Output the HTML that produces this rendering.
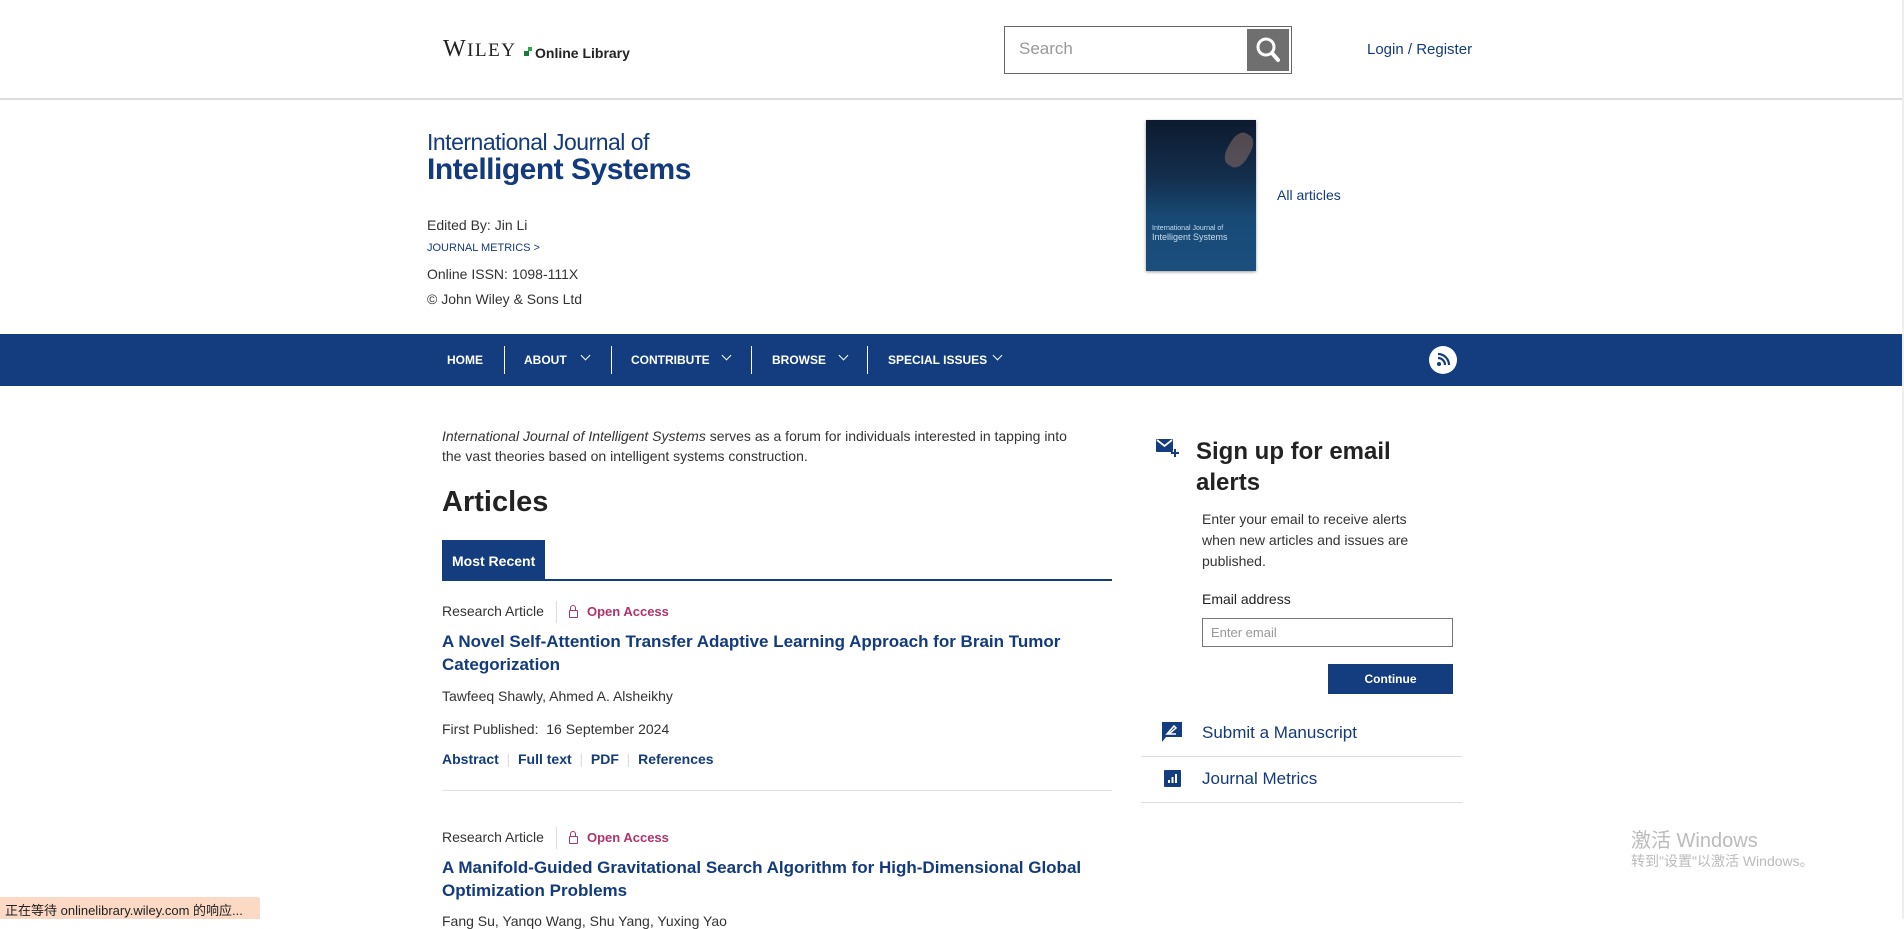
<!DOCTYPE html>
<html><head><meta charset="utf-8"><style>
*{margin:0;padding:0;box-sizing:border-box}
body{width:1904px;height:919px;overflow:hidden;background:#fff;font-family:"Liberation Sans","Noto Sans CJK SC",sans-serif;color:#333;position:relative}
.a{position:absolute;white-space:nowrap}
.blue{color:#133a7c}
.nav{position:absolute;left:0;top:334px;width:1904px;height:52px;background:#133d7e}
.nav span{position:absolute;top:19px;color:#fff;font-weight:bold;font-size:12px}
.sep{position:absolute;top:12px;width:1px;height:28px;background:#fff}
.chev{position:absolute;top:18px;width:7px;height:7px;border-right:1.5px solid #fff;border-bottom:1.5px solid #fff;transform:rotate(45deg)}
.t{font-size:17px;font-weight:bold;color:#133a7c;line-height:23px}
.s14{font-size:14px}
.lock{position:absolute;width:9px;height:8px;border:1.5px solid #b0336b;border-radius:1px}
.lock:before{content:"";position:absolute;left:0px;top:-6px;width:4px;height:4px;border:1.5px solid #b0336b;border-bottom:none;border-radius:3px 3px 0 0}
</style></head><body>
<div class="a" style="left:0;top:0;width:1904px;height:100px;border-bottom:2px solid #ddd"></div>
<div class="a" style="left:443px;top:36px;font-family:'Liberation Serif',serif;font-size:24px;color:#222;letter-spacing:1.5px">W<span style="font-size:19px">ILEY</span></div>
<div class="a" style="left:524px;top:51px;width:5px;height:5px;background:#1a7a3a"></div>
<div class="a" style="left:528px;top:47px;width:4px;height:4px;background:#2aa84a"></div>
<div class="a" style="left:535px;top:45px;font-size:14px;color:#222;font-weight:bold">Online Library</div>
<div class="a" style="left:1004px;top:26px;width:288px;height:48px;border:1px solid #666"></div>
<div class="a" style="left:1019px;top:39px;font-size:17px;color:#999">Search</div>
<div class="a" style="left:1247px;top:29px;width:42px;height:42px;background:#6f6f6f">
<svg width="42" height="42" viewBox="0 0 42 42"><circle cx="19" cy="18" r="8" fill="none" stroke="#fff" stroke-width="3"/><line x1="25" y1="24" x2="31" y2="31" stroke="#fff" stroke-width="4" stroke-linecap="round"/></svg></div>
<div class="a blue" style="left:1367px;top:41px;font-size:15px">Login / Register</div>
<div class="a blue" style="left:427px;top:129px;font-size:23px;letter-spacing:-0.5px">International Journal of</div>
<div class="a blue" style="left:427px;top:153px;font-size:30px;font-weight:bold;letter-spacing:-0.5px">Intelligent Systems</div>
<div class="a s14" style="left:427px;top:217px">Edited By: Jin Li</div>
<div class="a blue" style="left:427px;top:242px;font-size:11px">JOURNAL METRICS &gt;</div>
<div class="a s14" style="left:427px;top:266px">Online ISSN: 1098-111X</div>
<div class="a s14" style="left:427px;top:291px">© John Wiley &amp; Sons Ltd</div>
<div class="a" style="left:1146px;top:120px;width:110px;height:151px;background:linear-gradient(180deg,#0d1a2e 0%,#14304f 40%,#184a76 65%,#1a4e7c 100%);box-shadow:0 1px 3px #999">
<div style="position:absolute;right:6px;top:12px;width:22px;height:36px;border-radius:40%;background:#8a6e66;opacity:.55;transform:rotate(30deg)"></div>
<div style="position:absolute;left:6px;top:104px;color:#cde;font-size:7px;line-height:9px">International Journal of<br><span style="font-size:9px">Intelligent Systems</span></div></div>
<div class="a blue" style="left:1277px;top:187px;font-size:14px">All articles</div>
<div class="nav">
<span style="left:447px">HOME</span><div class="sep" style="left:504px"></div>
<span style="left:524px">ABOUT</span><div class="chev" style="left:582px"></div><div class="sep" style="left:611px"></div>
<span style="left:631px">CONTRIBUTE</span><div class="chev" style="left:723px"></div><div class="sep" style="left:751px"></div>
<span style="left:772px">BROWSE</span><div class="chev" style="left:840px"></div><div class="sep" style="left:867px"></div>
<span style="left:888px">SPECIAL ISSUES</span><div class="chev" style="left:994px"></div>
<div style="position:absolute;left:1429px;top:12px;width:28px;height:28px;border-radius:50%;background:#fff">
<svg width="28" height="28" viewBox="0 0 28 28"><circle cx="10" cy="18" r="2" fill="#133d7e"/><path d="M9 12a7 7 0 0 1 7 7M9 8a11 11 0 0 1 11 11" fill="none" stroke="#133d7e" stroke-width="2.2"/></svg></div>
</div>
<div class="a" style="left:442px;top:426px;font-size:14px;line-height:20px;color:#333"><i>International Journal of Intelligent Systems</i> serves as a forum for individuals interested in tapping into<br>the vast theories based on intelligent systems construction.</div>
<div class="a" style="left:442px;top:486px;font-size:29px;font-weight:bold;color:#222">Articles</div>
<div class="a" style="left:442px;top:540px;width:103px;height:40px;background:#133d7e;color:#fff;font-size:14px;font-weight:bold;padding:13px 0 0 10px">Most Recent</div>
<div class="a" style="left:442px;top:579px;width:670px;height:2px;background:#133d7e"></div>

<div class="a s14" style="left:442px;top:603px">Research Article</div>
<div class="a" style="left:556px;top:601px;width:1px;height:22px;background:#ddd"></div>
<div class="lock" style="left:569px;top:610px"></div>
<div class="a" style="left:587px;top:604px;font-size:13px;font-weight:bold;color:#b0336b">Open Access</div>
<div class="a t" style="left:442px;top:630px">A Novel Self-Attention Transfer Adaptive Learning Approach for Brain Tumor<br>Categorization</div>
<div class="a s14" style="left:442px;top:688px">Tawfeeq Shawly, Ahmed A. Alsheikhy</div>
<div class="a s14" style="left:442px;top:721px">First Published:&nbsp; 16 September 2024</div>
<div class="a blue" style="left:442px;top:751px;font-size:14px;font-weight:bold">Abstract <span style="color:#ddd;font-weight:normal">&nbsp;|&nbsp;</span> Full text <span style="color:#ddd;font-weight:normal">&nbsp;|&nbsp;</span> PDF <span style="color:#ddd;font-weight:normal">&nbsp;|&nbsp;</span> References</div>
<div class="a" style="left:442px;top:790px;width:670px;height:1px;background:#e3e3e3"></div>

<div class="a s14" style="left:442px;top:829px">Research Article</div>
<div class="a" style="left:556px;top:827px;width:1px;height:22px;background:#ddd"></div>
<div class="lock" style="left:569px;top:836px"></div>
<div class="a" style="left:587px;top:830px;font-size:13px;font-weight:bold;color:#b0336b">Open Access</div>
<div class="a t" style="left:442px;top:856px">A Manifold-Guided Gravitational Search Algorithm for High-Dimensional Global<br>Optimization Problems</div>
<div class="a s14" style="left:442px;top:913px">Fang Su, Yanqo Wang, Shu Yang, Yuxing Yao</div>
<svg class="a" style="left:1156px;top:439px" width="24" height="20" viewBox="0 0 24 20"><rect x="0" y="0" width="17" height="13" rx="1" fill="#133d7e"/><path d="M1 1l7.5 6 7.5-6" fill="none" stroke="#fff" stroke-width="1.8"/><path d="M19 10v8M15 14h8" stroke="#133d7e" stroke-width="2"/></svg>
<div class="a" style="left:1196px;top:436px;font-size:24px;font-weight:bold;line-height:31px;color:#222">Sign up for email<br>alerts</div>
<div class="a" style="left:1202px;top:509px;font-size:14px;line-height:21px;color:#333">Enter your email to receive alerts<br>when new articles and issues are<br>published.</div>
<div class="a" style="left:1202px;top:591px;font-size:14px;color:#222">Email address</div>
<div class="a" style="left:1202px;top:618px;width:251px;height:29px;border:1px solid #777;font-size:13px;color:#999;padding:6px 0 0 8px">Enter email</div>
<div class="a" style="left:1328px;top:664px;width:125px;height:30px;background:#133d7e;color:#fff;font-size:12px;font-weight:bold;text-align:center;padding-top:8px">Continue</div>
<svg class="a" style="left:1162px;top:722px" width="20" height="20" viewBox="0 0 20 20"><path d="M0 0h20v15H4l-4 5z" fill="#133d7e"/><path d="M5 12l7-8 2 2-7 6zM5 12h9" stroke="#fff" stroke-width="1.5" fill="none"/></svg>
<div class="a blue" style="left:1202px;top:723px;font-size:17px">Submit a Manuscript</div>
<div class="a" style="left:1141px;top:756px;width:321px;height:1px;background:#ddd"></div>
<svg class="a" style="left:1164px;top:770px" width="17" height="17" viewBox="0 0 17 17"><rect width="17" height="17" rx="1" fill="#133d7e"/><path d="M5 13v-3M8.5 13V7M12 13V4" stroke="#fff" stroke-width="2"/></svg>
<div class="a blue" style="left:1202px;top:769px;font-size:17px">Journal Metrics</div>
<div class="a" style="left:1141px;top:802px;width:321px;height:1px;background:#ddd"></div>
<div class="a" style="left:1631px;top:824px;font-size:20px;color:#bbb">激活 Windows</div>
<div class="a" style="left:1631px;top:851px;font-size:14px;color:#bbb">转到"设置"以激活 Windows。</div>
<div class="a" style="left:1902px;top:0;width:2px;height:919px;background:#eee"></div>
<div class="a" style="left:0;top:897px;width:260px;height:22px;background:#fcd9c4;border-radius:0 3px 0 0;font-size:13px;color:#222;padding:3px 0 0 5px">正在等待 onlinelibrary.wiley.com 的响应...</div>
</body></html>
